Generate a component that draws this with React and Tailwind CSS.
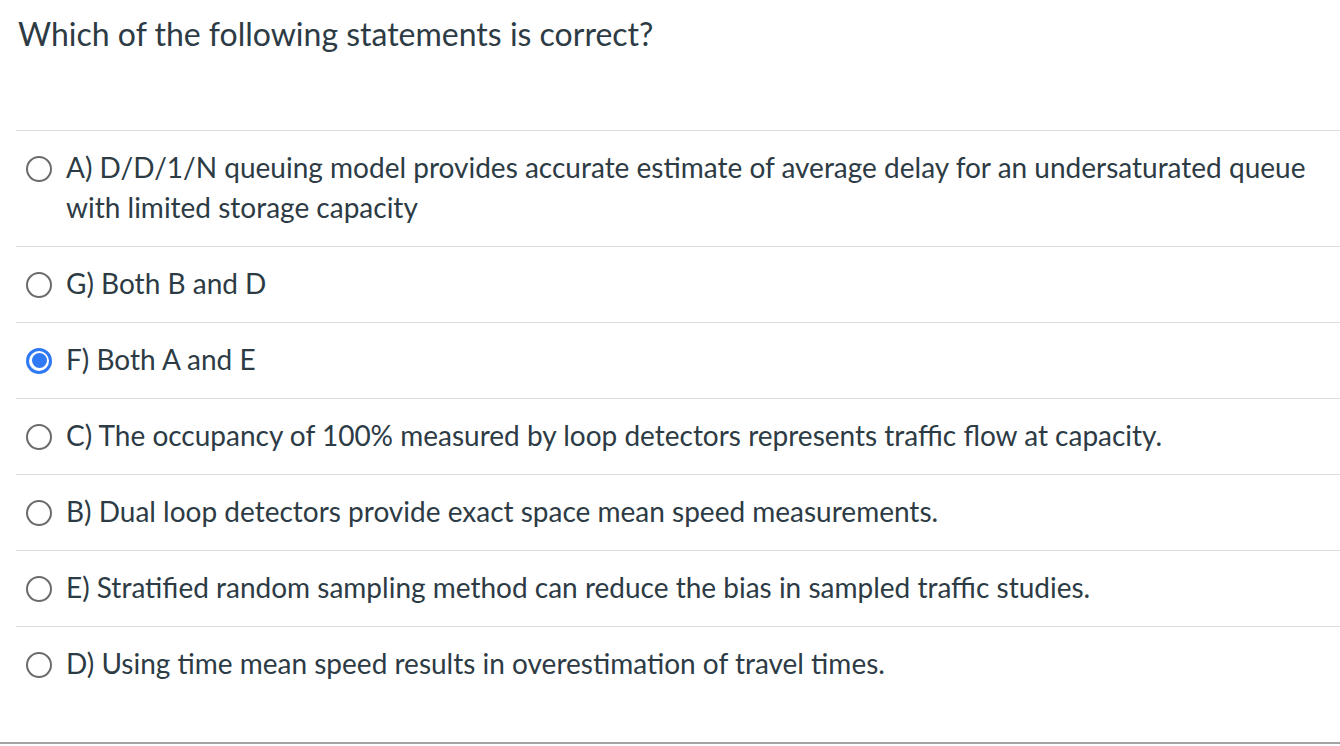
const options = [
  { id: "a", text: "A) D/D/1/N queuing model provides accurate estimate of average delay for an undersaturated queue with limited storage capacity" },
  { id: "g", text: "G) Both B and D" },
  { id: "f", text: "F) Both A and E", checked: true },
  { id: "c", text: "C) The occupancy of 100% measured by loop detectors represents traffic flow at capacity." },
  { id: "b", text: "B) Dual loop detectors provide exact space mean speed measurements." },
  { id: "e", text: "E) Stratified random sampling method can reduce the bias in sampled traffic studies." },
  { id: "d", text: "D) Using time mean speed results in overestimation of travel times." },
];

function Radio({ checked }) {
  if (checked) {
    return (
      <span className="flex h-[26px] w-[26px] shrink-0 items-center justify-center rounded-full border-[3px] border-[#3079f4] bg-white">
        <span className="h-[15px] w-[15px] rounded-full bg-[#3079f4]" />
      </span>
    );
  }
  return <span className="block h-[26px] w-[26px] shrink-0 rounded-full border-2 border-[#6b6b6b] bg-white" />;
}

export default function App() {
  return (
    <div className="h-[746px] w-[1340px] overflow-hidden bg-white font-['Lato',sans-serif] text-[#2d3b45]">
      <div className="pl-4">
        <h1 className="h-[130px] pl-[2px] pt-[14px] text-[32px] font-normal leading-[40px]">
          Which of the following statements is correct?
        </h1>
        {options.map((o) => (
          <div key={o.id} className="flex gap-[14px] border-t border-[#dcdcdc] pb-[19px] pl-[10px] pt-[16px]">
            <div className="flex h-[40px] shrink-0 items-center pt-[3px]">
              <Radio checked={o.checked} />
            </div>
            <p className="text-[28px] leading-[40px]">{o.text}</p>
          </div>
        ))}
      </div>
      <div className="mt-[40px] border-t-2 border-[#a3a3a3]" />
    </div>
  );
}
